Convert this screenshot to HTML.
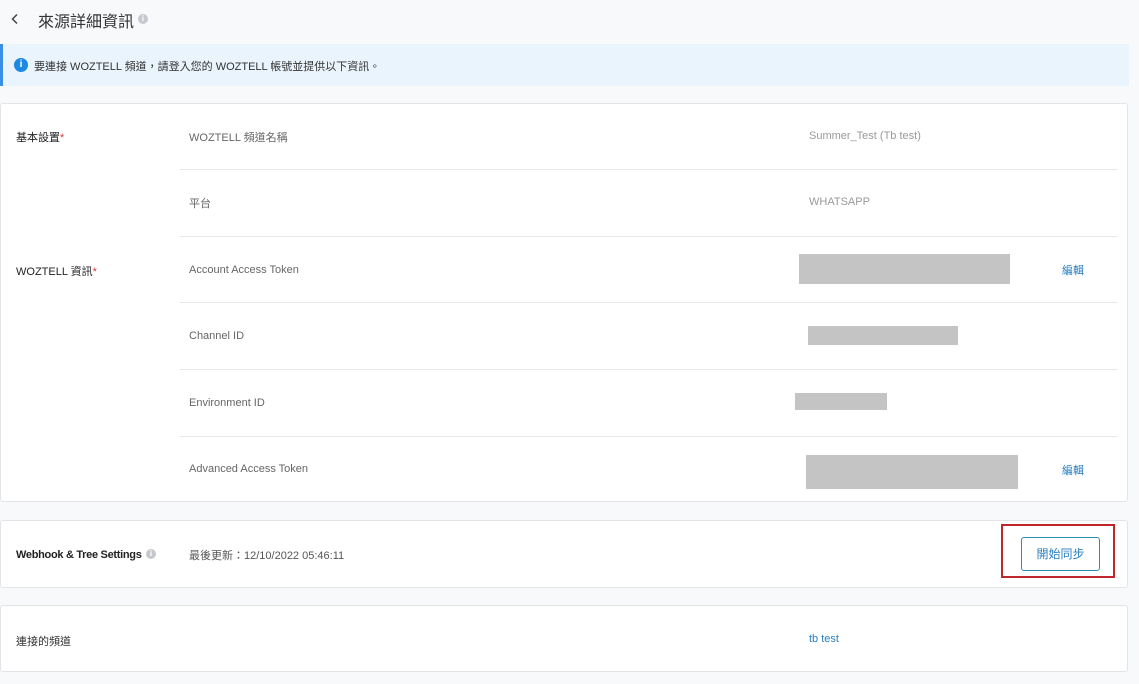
<!DOCTYPE html>
<html><head><meta charset="utf-8"><style>
body{margin:0;width:1139px;height:684px;background:#f8f9fb;font-family:"Liberation Sans","Noto Sans CJK TC",sans-serif;position:relative;overflow:hidden;color:#333}
.a{position:absolute}
.card{position:absolute;left:0;width:1128px;background:#fff;border:1px solid #e2e4e8;border-radius:3px;box-sizing:border-box}
.line{position:absolute;left:180px;width:938px;height:1px;background:#e6e8eb}
.lbl{position:absolute;font-size:11px;color:#666}
.h{position:absolute;font-size:11px;color:#222}
.gray{position:absolute;background:#c4c4c4}
.edit{position:absolute;font-size:11px;color:#2a7fc0}
.star{color:#d33}
</style></head><body>
<svg class="a" style="left:10px;top:13px" width="10" height="12" viewBox="0 0 10 12"><path d="M7 1.5 L2.5 6 L7 10.5" fill="none" stroke="#444" stroke-width="1.5"/></svg>
<div class="a" style="left:38px;top:8px;font-size:16px;color:#333">來源詳細資訊</div>
<div class="a" style="left:138px;top:14px;width:10px;height:10px;border-radius:50%;background:#c5c8cc;color:#fff;font-size:8px;text-align:center;line-height:10px;font-weight:bold">i</div>

<div class="a" style="left:0;top:44px;width:1129px;height:42px;background:#eaf4fd;border-left:3px solid #3a8ee6;box-sizing:border-box"></div>
<div class="a" style="left:14px;top:58px;width:14px;height:14px;border-radius:50%;background:#1e88e5;color:#fff;font-size:10px;text-align:center;line-height:14px;font-weight:bold">i</div>
<div class="a" style="left:34px;top:58px;font-size:11px;color:#333">要連接 WOZTELL 頻道，請登入您的 WOZTELL 帳號並提供以下資訊。</div>

<div class="card" style="top:103px;height:399px"></div>
<div class="line" style="top:169px"></div>
<div class="line" style="top:236px"></div>
<div class="line" style="top:302px"></div>
<div class="line" style="top:369px"></div>
<div class="line" style="top:436px"></div>
<div class="h" style="left:16px;top:129px">基本設置<span class="star">*</span></div>
<div class="h" style="left:16px;top:263px">WOZTELL 資訊<span class="star">*</span></div>
<div class="lbl" style="left:189px;top:129px">WOZTELL 頻道名稱</div>
<div class="lbl" style="left:809px;top:130px;color:#999">Summer_Test (Tb test)</div>
<div class="lbl" style="left:189px;top:195px">平台</div>
<div class="lbl" style="left:809px;top:196px;color:#999">WHATSAPP</div>
<div class="lbl" style="left:189px;top:264px">Account Access Token</div>
<div class="gray" style="left:799px;top:254px;width:211px;height:30px"></div>
<div class="edit" style="left:1062px;top:262px">編輯</div>
<div class="lbl" style="left:189px;top:330px">Channel ID</div>
<div class="gray" style="left:808px;top:326px;width:150px;height:19px"></div>
<div class="lbl" style="left:189px;top:397px">Environment ID</div>
<div class="gray" style="left:795px;top:393px;width:92px;height:17px"></div>
<div class="lbl" style="left:189px;top:463px">Advanced Access Token</div>
<div class="gray" style="left:806px;top:455px;width:212px;height:34px"></div>
<div class="edit" style="left:1062px;top:462px">編輯</div>

<div class="card" style="top:520px;height:68px"></div>
<div class="h" style="left:16px;top:549px;font-weight:bold;letter-spacing:-0.3px">Webhook &amp; Tree Settings</div>
<div class="a" style="left:146px;top:549px;width:10px;height:10px;border-radius:50%;background:#c5c8cc;color:#fff;font-size:8px;text-align:center;line-height:10px;font-weight:bold">i</div>
<div class="lbl" style="left:189px;top:547px;color:#555">最後更新：12/10/2022 05:46:11</div>
<div class="a" style="left:1001px;top:524px;width:114px;height:54px;border:2px solid #c0272d;box-sizing:border-box"></div>
<div class="a" style="left:1021px;top:537px;width:79px;height:34px;border:1px solid #2a8db3;border-radius:3px;box-sizing:border-box;font-size:12px;color:#2a7fc0;text-align:center;line-height:32px">開始同步</div>

<div class="card" style="top:605px;height:67px"></div>
<div class="lbl" style="left:16px;top:633px;color:#333">連接的頻道</div>
<div class="edit" style="left:809px;top:633px">tb test</div>
</body></html>
